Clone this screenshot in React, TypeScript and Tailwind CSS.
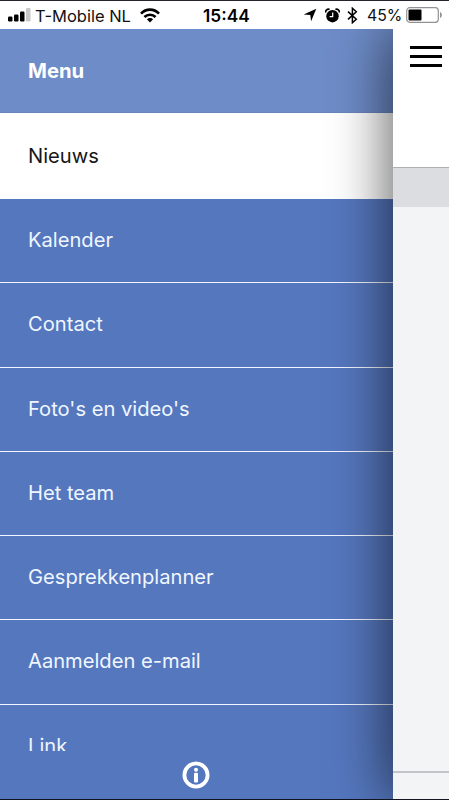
import { clsx } from 'clsx';

const items = ['Nieuws', 'Kalender', 'Contact', "Foto's en video's", 'Het team', 'Gesprekkenplanner', 'Aanmelden e-mail', 'Link'];

const StatusBar = () => (
  <header className="h-[29px] shrink-0 border-t border-[#25262b] bg-white text-[16.3px] leading-[28px] text-[#111]">
    <div className="flex h-full items-center pl-2">
      <svg className="h-[14px] w-[23px]" viewBox="0 0 23 14">
        <rect x="0" y="8.5" width="4.5" height="5" rx="1.2" />
        <rect x="6" y="6.5" width="4.5" height="7" rx="1.2" />
        <rect x="12" y="3.5" width="4.5" height="10" rx="1.2" />
        <rect x="18" y="0" width="4.5" height="13.5" rx="1.2" fill="#c9c9ca" />
      </svg>
      <span className="ml-[4px] w-[98px] pt-px text-[16.5px] whitespace-nowrap">T-Mobile NL</span>
      <svg className="ml-[7px] h-[15px] w-[20px]" viewBox="0 0 20 15" fill="none" stroke="#000" strokeWidth="2.6">
        <path d="M1 5.6C6 .3 14 .3 19 5.6M4.4 9C7.5 5.9 12.5 5.9 15.6 9" />
        <path d="M10 14.5 6.9 11.3C8.6 9.6 11.4 9.6 13.1 11.3Z" fill="#000" stroke="none" />
      </svg>
      <span className="ml-[43px] w-[48px] pt-px text-[17.3px] font-semibold whitespace-nowrap text-black">15:44</span>
      <svg className="ml-[52px] h-[14px] w-[14px]" viewBox="0 0 14 14">
        <path d="M13.3.7 8.1 13.2 7.3 7 .7 6.4Z" />
      </svg>
      <svg className="ml-[8px] h-[15px] w-[15px]" viewBox="0 0 15 15">
        <circle cx="7.5" cy="8.2" r="6.2" />
        <path d="M.8 4.6C.2 2.5 2.4.5 4.6 1.5M14.2 4.6C14.8 2.5 12.6.5 10.4 1.5" fill="none" stroke="#000" strokeWidth="1.7" />
        <path d="M7.7 4.5V8.7H4.6" fill="none" stroke="#fff" strokeWidth="1.2" />
      </svg>
      <svg className="ml-[7px] h-[17px] w-[11px]" viewBox="0 0 11 17" fill="none" stroke="#000" strokeWidth="1.5">
        <path d="M1 4.6 9.3 12.2 5.4 15.7V1.3L9.3 4.8 1 12.4" />
      </svg>
      <span className="ml-[9px] w-[34px] pt-[2px] text-[15.8px] whitespace-nowrap">45%</span>
      <svg className="ml-[5px] h-[16px] w-[37px]" viewBox="0 0 37 16">
        <rect x=".7" y=".7" width="31.6" height="14.6" rx="3" fill="none" stroke="#929294" strokeWidth="1.2" />
        <rect x="2.5" y="2.5" width="13" height="11" rx="1" />
        <path d="M34 5C36.5 6 36.5 10 34 11Z" fill="#929294" />
      </svg>
    </div>
  </header>
);

const Menu = () => (
  <nav className="flex w-[393px] shrink-0 flex-col bg-[#5577be]">
    <div className="flex h-[84px] shrink-0 items-center border-b border-[#6a86bd] bg-[#6e8cc8] pt-[2px] pl-7 text-[20.3px] font-bold text-white">Menu</div>
    <ul className="h-[638px] overflow-hidden text-[20.15px]">
      {items.map((item, index) => (
        <li
          key={item}
          className={clsx(
            'flex items-center pl-7',
            index === 0 ? 'h-[86px] bg-white text-[#171717]' : 'h-[84.25px] border-b border-[#f2f7ff] pb-px text-[#eff6ff]',
          )}
        >
          {item}
        </li>
      ))}
    </ul>
    <div className="flex flex-1 items-start justify-center pt-[10px] pr-[2px]">
      <svg className="h-[28px] w-[28px]" viewBox="0 0 28 28">
        <circle cx="14" cy="14" r="11.6" fill="none" stroke="#fff" strokeWidth="3.8" />
        <circle cx="14" cy="8.7" r="2" fill="#fff" />
        <rect x="12" y="11.7" width="4" height="9.8" rx="1.2" fill="#fff" />
      </svg>
    </div>
  </nav>
);

const Page = () => (
  <main className="relative flex flex-1 flex-col bg-[#f3f4f6] shadow-[0_0_60px_rgba(0,0,0,0.72)]">
    <div className="h-[139px] border-b border-[#b0b0b2] bg-white pt-[17px] pl-[17px]">
      <div className="flex w-[32px] flex-col gap-[6px]">
        <span className="h-[3px] bg-black" />
        <span className="h-[3px] bg-black" />
        <span className="h-[3px] bg-black" />
      </div>
    </div>
    <div className="h-[39px] bg-[#dcdde1]" />
    <div className="flex-1" />
    <div className="h-[28px] border-t-2 border-[#c3c4c8]" />
  </main>
);

export default function App() {
  return (
    <div className="flex h-[800px] w-[450px] flex-col overflow-hidden border-r border-white bg-white font-['Inter',sans-serif]">
      <StatusBar />
      <div className="flex flex-1 overflow-hidden border-b border-[#11151f]">
        <Menu />
        <Page />
      </div>
    </div>
  );
}
